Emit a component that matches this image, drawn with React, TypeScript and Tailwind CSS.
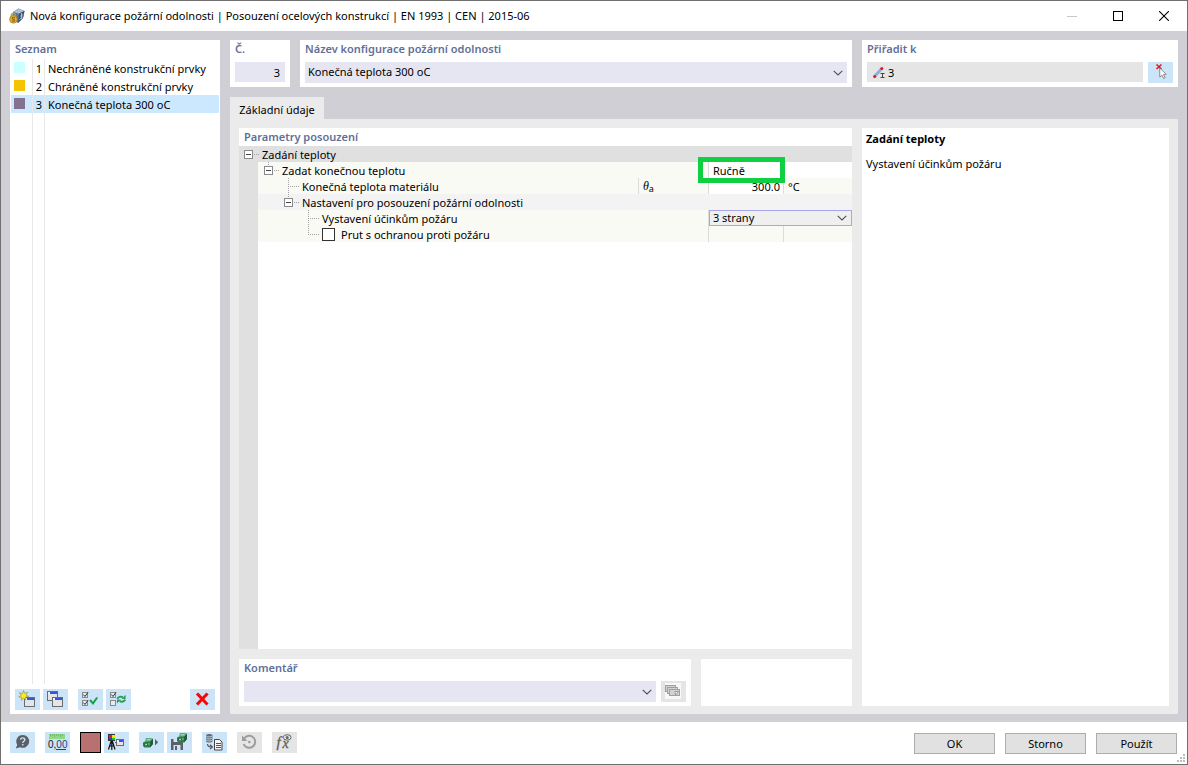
import type { ReactNode } from "react";

const crisp = { shapeRendering: "crispEdges" as const };

function Tool({ label, disabled, children }: { label: string; disabled?: boolean; children: ReactNode }) {
  return (
    <button
      type="button"
      aria-label={label}
      disabled={disabled}
      className={`h-[21px] w-[25px] shrink-0 ${disabled ? "bg-[#e5e5e5]" : "bg-[#cce4f7]"}`}
    >
      <svg viewBox="0 0 25 21" className="block h-[21px] w-[25px]" aria-hidden="true">
        {children}
      </svg>
    </button>
  );
}

function MiniWindow({ x, y, w = 11, h = 10 }: { x: number; y: number; w?: number; h?: number }) {
  return (
    <g {...crisp}>
      <rect x={x} y={y} width={w} height={h} fill="#6a6d70" />
      <rect x={x + 1} y={y + 1} width={w - 2} height={2} fill="#f2f5fa" />
      <rect x={x + 3} y={y + 1} width={w - 4} height={2} fill="#3355e6" />
      <rect x={x + 1} y={y + 3} width={w - 2} height={h - 4} fill="#e4e5e7" />
    </g>
  );
}

function MiniCheck({ y, on }: { y: number; on?: boolean }) {
  return (
    <g>
      <rect x="4.5" y={y + 0.5} width="5" height="5" fill="#e4ecf2" stroke="#8a8a8a" />
      {on && <path d={`M5.3 ${y + 2.5}l1.7 2L10 ${y + 0.3}`} fill="none" stroke="#333" strokeWidth="1" />}
    </g>
  );
}

function Cube({ x, y }: { x: number; y: number }) {
  return (
    <g transform={`translate(${x} ${y})`}>
      <path d="M3 0L10 0.8V6L7 9.5H1.5L0 8V4.5L3 3Z" fill="#2f7d4f" />
      <path d="M3 0L10 0.8L7.4 3.6L2 3.4Z" fill="#5cb37d" />
      <path d="M7.4 3.6L10 0.8V6L7 9.5Z" fill="#1f5c3a" />
      <circle cx="3" cy="6.4" r="1.7" fill="#1f5c3a" />
      <circle cx="3" cy="6.4" r="1" fill="#b6e3c6" />
      <path d="M4 1.8h3.4M5.2 6h1.4" stroke="#b4e5c6" />
    </g>
  );
}

function Chevron() {
  return (
    <svg viewBox="0 0 10 6" className="pointer-events-none h-[6px] w-[10px] shrink-0" aria-hidden="true">
      <path d="M0.7 0.8L5 5L9.3 0.8" fill="none" stroke="#505050" strokeWidth="1.1" />
    </svg>
  );
}

function Combo({ label, value, className }: { label: string; value: string; className: string }) {
  return (
    <div className={`grid grid-cols-[minmax(0,1fr)_14px] items-center ${className}`}>
      <select
        aria-label={label}
        defaultValue={value}
        className="col-span-2 col-start-1 row-start-1 h-full w-full appearance-none bg-transparent pr-4 pl-[3px] outline-none"
      >
        <option>{value}</option>
      </select>
      <div className="pointer-events-none col-start-2 row-start-1">
        <Chevron />
      </div>
    </div>
  );
}

function Caption({ children }: { children: ReactNode }) {
  return <h2 className="h-[18px] px-[5px] leading-[18px] font-semibold text-[#5f6f98]">{children}</h2>;
}

function Lines({ width, box, paths }: { width: number; box?: number; paths: string[] }) {
  return (
    <svg width={width} height="16" viewBox={`0 0 ${width} 16`} className="block shrink-0" aria-hidden="true">
      {paths.map((d) => (
        <path key={d} d={d} stroke="#a3a3a3" strokeDasharray="1 1" fill="none" {...crisp} />
      ))}
      {box !== undefined && (
        <g>
          <rect x={box + 0.5} y="4.5" width="8" height="8" fill="#fff" stroke="#8a8a8a" />
          <path d={`M${box + 2} 8.5h5`} stroke="#444" />
        </g>
      )}
    </svg>
  );
}

const items = [
  { n: 1, name: "Nechráněné konstrukční prvky", swatch: "bg-[#ccffff]", row: "" },
  { n: 2, name: "Chráněné konstrukční prvky", swatch: "bg-[#f5c400]", row: "" },
  { n: 3, name: "Konečná teplota 300 oC", swatch: "bg-[#84708f]", row: "bg-[#cce8ff]" },
];

function TitleBar() {
  return (
    <header className="flex h-[30px] shrink-0 items-center bg-white pl-[8px]">
      <svg viewBox="0 0 16 16" className="h-4 w-4" aria-hidden="true">
        <path d="M4 4L9.5 0.5L15.5 3L14 10L9 15L3 11Z" fill="#5d7899" />
        <path d="M4 4L9.5 0.5L15.5 3L10 5.8Z" fill="#9db2ca" />
        <path d="M10 5.8L15.5 3L14 10L9 15Z" fill="#3b4f69" />
        <path d="M6.5 3.2l5 1.4M8.5 1.8l5 1.4M11 8.4l3.2-2M10.3 11.6l3.3-2.6M12.5 5v6" fill="none" stroke="#c3d3e4" strokeWidth="0.8" />
        <path d="M2.3 9V7.4a2 2 0 0 1 4 0V9" fill="none" stroke="#c9982a" strokeWidth="1.3" />
        <circle cx="4.4" cy="11.4" r="3.8" fill="#e0ae35" stroke="#a87b1e" strokeWidth="0.7" />
        <path d="M5.8 9.5H3.4v1.8h2v1.9H3" fill="none" stroke="#81590e" strokeWidth="0.9" />
      </svg>
      <h1 className="ml-[5px] flex-1 truncate">
        Nová konfigurace požární odolnosti | Posouzení ocelových konstrukcí | EN 1993 | CEN | 2015-06
      </h1>
      <div className="flex">
        <button type="button" aria-label="Minimalizovat" disabled className="grid h-[30px] w-[46px] place-items-center">
          <svg width="10" height="10" aria-hidden="true"><path d="M0 5.5h10" stroke="#c8c8c8" /></svg>
        </button>
        <button type="button" aria-label="Maximalizovat" className="grid h-[30px] w-[46px] place-items-center">
          <svg width="10" height="10" aria-hidden="true"><rect x="0.5" y="0.5" width="9" height="9" fill="none" stroke="#000" /></svg>
        </button>
        <button type="button" aria-label="Zavřít" className="grid h-[30px] w-[46px] place-items-center">
          <svg width="10" height="10" aria-hidden="true"><path d="M0 0L10 10M10 0L0 10" stroke="#000" strokeWidth="1.1" /></svg>
        </button>
      </div>
    </header>
  );
}

function ListPanel() {
  return (
    <aside className="flex w-[210px] shrink-0 flex-col bg-white">
      <Caption>Seznam</Caption>
      <ul className="px-px pt-px">
        {items.map((it) => (
          <li key={it.n}>
            <button type="button" className={`flex h-[18px] w-full items-stretch text-left ${it.row}`}>
              <span className="w-[22px] border-r border-[#e8e8e8] pt-[3px] pl-[3px]">
                <span className={`block h-[11px] w-[11px] ${it.swatch}`} />
              </span>
              <span className="w-[12px] border-r border-[#e8e8e8] pr-[2px] text-right leading-[20px]">{it.n}</span>
              <span className="pl-[3px] leading-[20px] whitespace-nowrap">{it.name}</span>
            </button>
          </li>
        ))}
      </ul>
      <div className="flex flex-1 px-px">
        <div className="w-[22px] border-r border-[#e8e8e8]" />
        <div className="w-[12px] border-r border-[#e8e8e8]" />
      </div>
      <div className="flex gap-[3px] p-[5px] pb-1">
        <Tool label="Nový">
          <MiniWindow x={9} y={8} />
          <path d="M8.5 1.5l1.1 2.8 3-1-1.5 2.7 2.6 1.4-3 .6.2 2.9-2.3-1.8-2 2.2v-2.9l-2.8-.4 2.4-1.6L4.4 3.8l2.9.8z" fill="#ffe81c" stroke="#7f8a4c" strokeWidth="0.6" />
        </Tool>
        <Tool label="Kopírovat">
          <MiniWindow x={4} y={2} />
          <MiniWindow x={9} y={8} />
        </Tool>
        <div className="w-1" />
        <Tool label="Vybrat vše">
          <MiniCheck y={3} on />
          <MiniCheck y={11} on />
          <path d="M12 11l3 3.4L19.2 8.5" fill="none" stroke="#13a34a" strokeWidth="2" />
        </Tool>
        <Tool label="Invertovat výběr">
          <MiniCheck y={3} on />
          <MiniCheck y={11} />
          <path d="M11.3 9.8c.8-2 3.4-2.6 5.6-1.6M19.2 10.6c-.8 2-3.4 2.6-5.6 1.6" fill="none" stroke="#2c9c58" strokeWidth="1.9" />
          <path d="M19.6 5.8v4.2h-4zM10.9 14.6v-4.2h4z" fill="#2c9c58" />
        </Tool>
        <div className="flex-1" />
        <Tool label="Odstranit">
          <path d="M8 5.5L16.5 14.5M16.5 5.5L8 14.5" stroke="#fa0505" strokeWidth="3" strokeLinecap="square" />
        </Tool>
      </div>
    </aside>
  );
}

function ParameterTable() {
  return (
    <table className="w-full table-fixed border-collapse">
      <colgroup>
        <col className="w-[19px]" />
        <col />
        <col className="w-[70px]" />
        <col className="w-[75px]" />
        <col className="w-[69px]" />
      </colgroup>
      <tbody className="leading-[16px]">
        <tr className="h-4 bg-[#e0e0e0]">
          <td colSpan={5} className="p-0">
            <div className="flex h-4">
              <Lines width={23} box={5} paths={["M15 8.5h6"]} />
              <span className="pt-px">Zadání teploty</span>
            </div>
          </td>
        </tr>
        <tr className="h-4 bg-[#f9faf4]">
          <td className="bg-[#e0e0e0] p-0" />
          <td colSpan={2} className="p-0">
            <div className="flex h-4">
              <Lines width={24} box={6} paths={["M10.5 0v4", "M16 8.5h6"]} />
              <span className="pt-px">Zadat konečnou teplotu</span>
            </div>
          </td>
          <td colSpan={2} className="bg-white p-0">
            <div className="relative h-4 border-l border-[#dcdcdc]">
              <select aria-label="Zadat konečnou teplotu" className="block h-4 w-full appearance-none bg-transparent pt-px pl-1 leading-[15px] outline-none">
                <option>Ručně</option>
              </select>
              <div className="pointer-events-none absolute -top-[5px] -left-[11px] h-[26px] w-[87px] border-5 border-[#0fd043]" />
            </div>
          </td>
        </tr>
        <tr className="h-4 bg-[#f9faf4]">
          <td className="bg-[#e0e0e0] p-0" />
          <td className="p-0">
            <div className="flex h-4">
              <Lines width={44} paths={["M30.5 0v16", "M30 8.5h11"]} />
              <span className="pt-px">Konečná teplota materiálu</span>
            </div>
          </td>
          <td className="p-0">
            <div className="flex h-4 items-baseline border-l border-[#dcdcdc] pl-1 leading-[17px]">
              <i className="font-['Liberation_Serif',serif] text-[12px]">θ</i>
              <sub className="text-[9px]">a</sub>
            </div>
          </td>
          <td className="bg-white p-0">
            <div className="h-4 border-l border-[#dcdcdc]">
              <input aria-label="Konečná teplota materiálu" defaultValue="300.0" className="block h-4 w-full bg-transparent pt-px pr-[3px] text-right outline-none" />
            </div>
          </td>
          <td className="p-0">
            <div className="h-4 border-l border-[#dcdcdc] pt-px pl-1">°C</div>
          </td>
        </tr>
        <tr className="h-4 bg-[#f3f3f3]">
          <td className="bg-[#e0e0e0] p-0" />
          <td colSpan={4} className="p-0">
            <div className="flex h-4">
              <Lines width={44} box={26} paths={["M30.5 0v4", "M36 8.5h6"]} />
              <span className="pt-px">Nastavení pro posouzení požární odolnosti</span>
            </div>
          </td>
        </tr>
        <tr className="h-4 bg-[#f9faf4]">
          <td className="bg-[#e0e0e0] p-0" />
          <td colSpan={2} className="p-0">
            <div className="flex h-4">
              <Lines width={64} paths={["M50.5 0v16", "M50 8.5h11"]} />
              <span className="pt-px">Vystavení účinkům požáru</span>
            </div>
          </td>
          <td colSpan={2} className="p-0">
            <div className="border-l border-[#dcdcdc]">
              <Combo label="Vystavení účinkům požáru" value="3 strany" className="h-4 border border-[#a9a5ea] bg-[#efefef] leading-[14px]" />
            </div>
          </td>
        </tr>
        <tr className="h-4 bg-[#f9faf4]">
          <td className="bg-[#e0e0e0] p-0" />
          <td colSpan={2} className="p-0">
            <div className="flex h-4">
              <Lines width={64} paths={["M50.5 0v9", "M50 8.5h11"]} />
              <label className="flex gap-[6px]">
                <input type="checkbox" className="mt-[2px] h-[13px] w-[13px] appearance-none border border-[#333] bg-white checked:bg-[#333]" />
                <span className="pt-px">Prut s ochranou proti požáru</span>
              </label>
            </div>
          </td>
          <td className="p-0"><div className="h-4 border-l border-[#dcdcdc]" /></td>
          <td className="p-0"><div className="h-4 border-l border-[#dcdcdc]" /></td>
        </tr>
      </tbody>
    </table>
  );
}

function Footer() {
  return (
    <footer className="relative flex h-[42px] shrink-0 items-start gap-[10px] bg-white px-[9px] pt-[10px]">
      <Tool label="Nápověda">
        <path d="M12.7 3a6.4 6.4 0 1 1-2.6 12.2L5.8 16.6l1.4-3.9A6.4 6.4 0 0 1 12.7 3z" fill="#5b6066" />
        <path d="M10.6 7.8c.1-2.6 4.3-2.5 4.2 0 0 1.4-2 1.5-2 3.1M12.8 12v1.5" fill="none" stroke="#cce4f7" strokeWidth="1.4" />
      </Tool>
      <Tool label="Jednotky a desetinná místa">
        <rect x="4" y="2" width="16" height="5" fill="#91d784" {...crisp} />
        <path d="M5.5 2v2M7.5 2v2M9.5 2v3M11.5 2v2M13.5 2v2M15.5 2v3M17.5 2v2" stroke="#6fbf64" {...crisp} />
        <text x="3" y="15.5" fontSize="10" fontFamily="Liberation Sans" fill="#111">0,<tspan fill="#1c3d80">00</tspan></text>
        <path d="M11 17.5h10" stroke="#1c3d80" {...crisp} />
      </Tool>
      <div className="flex gap-[3px]">
        <button type="button" aria-label="Barva" className="h-[21px] w-[21px] border border-black bg-[#b97071]" />
        <Tool label="Zobrazení">
          <g {...crisp}>
            <rect x="4" y="2" width="7" height="7" fill="#333" />
            <rect x="5" y="3" width="3" height="3" fill="#f21616" />
            <rect x="8" y="3" width="3" height="3" fill="#f5e300" />
            <rect x="5" y="6" width="3" height="2" fill="#1c3cf2" />
            <rect x="8" y="6" width="3" height="2" fill="#13c532" />
            <path d="M11 10.5h2" stroke="#555" />
          </g>
          <path d="M4.5 17.5L7 9.5h1.5l2.5 8M6 14h4M7.8 10v8" fill="none" stroke="#111" strokeWidth="1.2" />
          <MiniWindow x={12} y={7} w={8} h={7} />
        </Tool>
      </div>
      <div className="flex gap-[3px]">
        <Tool label="Načíst">
          <Cube x={4} y={6} />
          <path d="M16 7l3.2 3.2L16 13.4z" fill="#5b6066" />
        </Tool>
        <Tool label="Uložit">
          <path d="M4 7h10.5L16 9v9H4z" fill="#5b6066" />
          <path d="M6.5 7h5v3h-5zM6.5 13h7v5h-7z" fill="#cce4f7" />
          <path d="M8 14h2v4H8z" fill="#5b6066" />
          <Cube x={10} y={1} />
        </Tool>
      </div>
      <Tool label="Databáze">
        <path d="M4 3.5c0-2 6.5-2 6.5 0V9c0 2-6.5 2-6.5 0z" fill="#686d73" />
        <path d="M4 4c1 1.2 5.5 1.2 6.5 0M4 6c1 1.2 5.5 1.2 6.5 0M4 8c1 1.2 5.5 1.2 6.5 0" fill="none" stroke="#cce4f7" strokeWidth="0.8" />
        <path d="M5.5 12c0 2.3 1 3 4 3M8 12.8l2.4 2.2L8 17" fill="none" stroke="#545b64" strokeWidth="1.2" />
        <path d="M12.5 7.5h5l2.5 2.5v8h-7.5z" fill="#f6f6f6" stroke="#444" />
        <path d="M14 11.5h4.5M14 13.5h4.5M14 15.5h4.5" stroke="#555" {...crisp} />
      </Tool>
      <Tool label="Obnovit" disabled>
        <path d="M7.2 6.5A6 6 0 1 1 6.6 12" fill="none" stroke="#9d9d9d" strokeWidth="2" />
        <path d="M5 3.5v5.5h5.5z" fill="#9d9d9d" />
        <circle cx="12.3" cy="10" r="1.3" fill="#9d9d9d" />
      </Tool>
      <Tool label="Vzorec" disabled>
        <text x="4.5" y="14.5" fontSize="15" fontStyle="italic" fontFamily="Liberation Serif" fill="#5c5c5c" stroke="#5c5c5c" strokeWidth="0.3">f</text>
        <text x="10.5" y="15.5" fontSize="14" fontStyle="italic" fontFamily="Liberation Serif" fill="#5c5c5c" stroke="#5c5c5c" strokeWidth="0.3">x</text>
        <ellipse cx="15.2" cy="5.4" rx="3.9" ry="2.7" fill="#e5e5e5" stroke="#666" />
        <circle cx="15.2" cy="5.4" r="1.5" fill="#666" />
      </Tool>
      <div className="ml-auto flex gap-[10px] pt-px pr-px">
        {["OK", "Storno", "Použít"].map((t) => (
          <button key={t} type="button" className="h-[21px] w-[81px] border border-[#adadad] bg-[#e1e1e1] leading-[19px]">
            {t}
          </button>
        ))}
      </div>
      <svg className="absolute right-[2px] bottom-[2px] h-[8px] w-[8px]" viewBox="0 0 8 8" aria-hidden="true">
        <path d="M6 0h2v2H6zM3 3h2v2H3zM6 3h2v2H6zM0 6h2v2H0zM3 6h2v2H3zM6 6h2v2H6z" fill="#bdbdbd" />
      </svg>
    </footer>
  );
}

export default function App() {
  return (
    <div className="flex min-h-screen flex-col border border-[#707070] bg-[#d0cfd5] font-['Noto_Sans','Open_Sans',sans-serif] text-[11px] text-black">
      <TitleBar />
      <main className="flex flex-1 gap-[10px] px-[9px] pt-[9px] pb-2">
        <ListPanel />
        <div className="flex min-w-0 flex-1 flex-col">
          <div className="flex gap-[10px]">
            <section className="h-[47px] w-[60px] bg-white">
              <Caption>Č.</Caption>
              <input aria-label="Č." defaultValue="3" className="mx-[5px] mt-1 block h-[20px] w-[50px] bg-[#e6e6f2] pr-[5px] text-right outline-none" />
            </section>
            <section className="h-[47px] min-w-0 flex-1 bg-white">
              <Caption>Název konfigurace požární odolnosti</Caption>
              <Combo label="Název konfigurace požární odolnosti" value="Konečná teplota 300 oC" className="mx-[5px] mt-1 h-[21px] bg-[#e6e6f2]" />
            </section>
            <section className="h-[47px] w-[316px] shrink-0 bg-white">
              <Caption>Přiřadit k</Caption>
              <div className="mx-[5px] mt-1 flex gap-[5px]">
                <div className="flex h-[20px] min-w-0 flex-1 items-center bg-[#e5e5e5] pl-[6px]">
                  <svg viewBox="0 0 13 13" className="h-[13px] w-[13px] shrink-0" aria-hidden="true">
                    <path d="M1.7 10.2L8.8 2.5" stroke="#8faedb" strokeWidth="3" />
                    <circle cx="1.7" cy="10.5" r="1.5" fill="#e81313" />
                    <circle cx="8.8" cy="2.4" r="1.5" fill="#e81313" />
                    <path d="M7.5 7.5h4M9.5 7.5v4M7.5 11.5h4" stroke="#444" fill="none" />
                  </svg>
                  <input aria-label="Přiřadit k" defaultValue="3" className="h-full min-w-0 flex-1 bg-transparent pl-[2px] outline-none" />
                </div>
                <Tool label="Vybrat pruty">
                  <path d="M8.5 2.5l5 4.5M13.5 2.5l-5 4.5" stroke="#e81313" strokeWidth="1.5" />
                  <path d="M11.7 6l6.5 6.3-2.8.2 1.8 3.2-1.5.8-1.7-3.3-2.2 1.9z" fill="#fff" stroke="#808080" strokeWidth="0.9" />
                </Tool>
              </div>
            </section>
          </div>
          <div className="mt-[10px] flex" role="tablist">
            <button type="button" role="tab" aria-selected="true" className="h-[22px] w-[94px] bg-[#ebebeb] pt-[5px]">
              Základní údaje
            </button>
          </div>
          <div className="flex flex-1 gap-[10px] bg-[#ebebeb] px-[9px] pt-[9px] pb-2">
            <div className="flex min-w-0 flex-1 flex-col gap-[10px]">
              <section className="flex flex-1 flex-col bg-white">
                <Caption>Parametry posouzení</Caption>
                <ParameterTable />
                <div className="w-[19px] flex-1 bg-[#e0e0e0]" />
              </section>
              <div className="flex gap-[10px]">
                <section className="h-[47px] min-w-0 flex-1 bg-white">
                  <Caption>Komentář</Caption>
                  <div className="mx-[5px] mt-1 flex gap-[5px]">
                    <Combo label="Komentář" value="" className="h-[21px] flex-1 bg-[#e6e6f2]" />
                    <Tool label="Komentáře" disabled>
                      <rect x="4" y="2" width="16" height="16" fill="#f8f8f8" />
                      <g fill="#d2d2d2" stroke="#a0a0a0">
                        <rect x="4.5" y="4.5" width="10" height="6" />
                        <rect x="6.5" y="6.5" width="10" height="6" />
                        <rect x="8.5" y="8.5" width="10" height="6" />
                      </g>
                      <path d="M14 10.5h3.5L14.5 14z" fill="#fff" stroke="#888" strokeWidth="0.8" />
                    </Tool>
                  </div>
                </section>
                <div className="h-[47px] w-[151px] shrink-0 bg-white" />
              </div>
            </div>
            <aside className="w-[307px] shrink-0 bg-white px-1 pt-[3px]">
              <h2 className="leading-[16px] font-bold">Zadání teploty</h2>
              <p className="mt-[9px] leading-[16px]">Vystavení účinkům požáru</p>
            </aside>
          </div>
        </div>
      </main>
      <Footer />
    </div>
  );
}
